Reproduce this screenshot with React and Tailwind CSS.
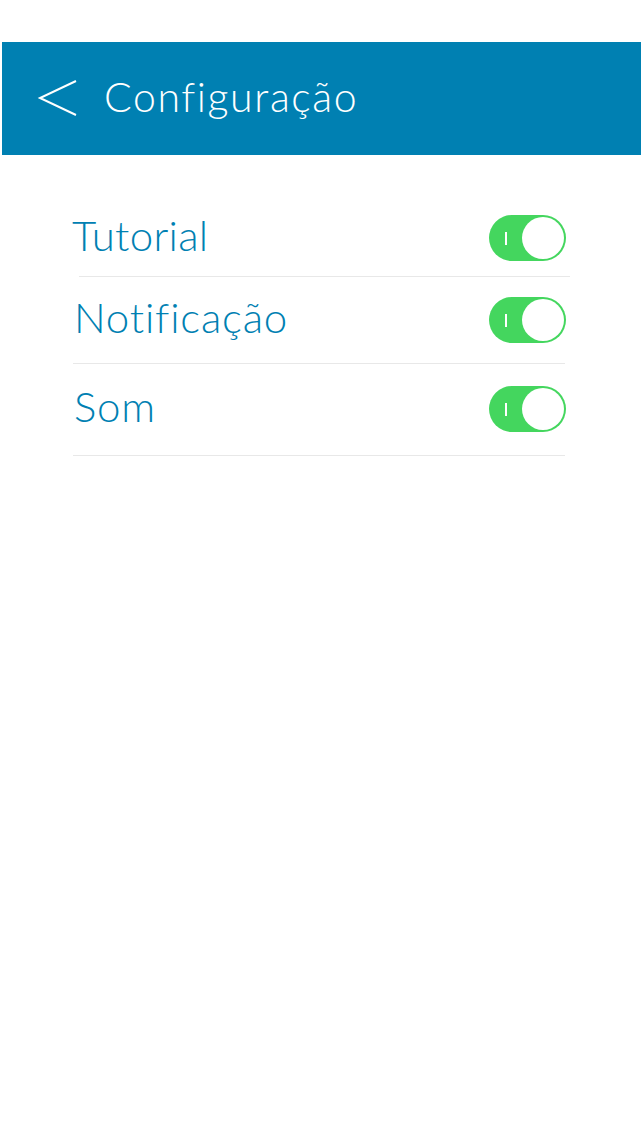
import { useState } from 'react'

const Toggle = ({ on, onChange }) => {
  return (
    <button
      onClick={onChange}
      className={`relative flex items-center w-[77px] h-[46px] rounded-full shrink-0 ${on ? 'bg-[#44d65e]' : 'bg-[#e5e5e5]'}`}
    >
      <span className="absolute left-[16px] top-[17px] w-[2px] h-[13px] bg-white" />
      <span
        className={`absolute top-[2px] w-[42px] h-[42px] rounded-full bg-white ${on ? 'left-[33px]' : 'left-[2px]'}`}
      />
    </button>
  )
}

const Header = () => {
  return (
    <div className="mt-[42px] ml-[2px] w-[639px] h-[113px] bg-[#0080b2] flex items-center">
      <svg className="ml-[35px]" width="42" height="40" viewBox="0 0 42 40">
        <path d="M39 2 L3 19 L39 36" fill="none" stroke="white" strokeWidth="2" />
      </svg>
      <h1 className="ml-[25px] mb-[4px] text-white text-[41px] font-light tracking-[1.6px]">
        Configuração
      </h1>
    </div>
  )
}

const Row = ({ label, on, onChange, className, textClass }) => {
  return (
    <div className={`flex items-center justify-between ${className}`}>
      <span className={`text-[#0080b2] text-[42px] font-light leading-[34px] mb-[6px] ${textClass}`}>
        {label}
      </span>
      <Toggle on={on} onChange={onChange} />
    </div>
  )
}

const App = () => {
  const [settings, setSettings] = useState({ tutorial: true, notif: true, som: true })
  const flip = (key) => setSettings({ ...settings, [key]: !settings[key] })

  return (
    <div className="w-[642px] h-[1137px] bg-white" style={{ fontFamily: 'Lato, "Open Sans", sans-serif' }}>
      <Header />
      <div className="mt-[45px] ml-[73px] w-[493px]">
        <Row
          label="Tutorial"
          on={settings.tutorial}
          onChange={() => flip('tutorial')}
          className="pt-[15px] pb-[15px]"
          textClass="-ml-[1px] tracking-[0.3px]"
        />
        <div className="ml-[6px] w-[491px] h-px bg-[#e8e8e8]" />
        <Row
          label="Notificação"
          on={settings.notif}
          onChange={() => flip('notif')}
          className="pt-[20px] pb-[20px]"
          textClass="ml-[1px] tracking-[0.8px]"
        />
        <div className="w-[492px] h-px bg-[#e8e8e8]" />
        <Row
          label="Som"
          on={settings.som}
          onChange={() => flip('som')}
          className="pt-[22px] pb-[23px]"
          textClass="ml-[1px] tracking-[0.8px]"
        />
        <div className="w-[492px] h-px bg-[#e8e8e8]" />
      </div>
    </div>
  )
}

export default App
